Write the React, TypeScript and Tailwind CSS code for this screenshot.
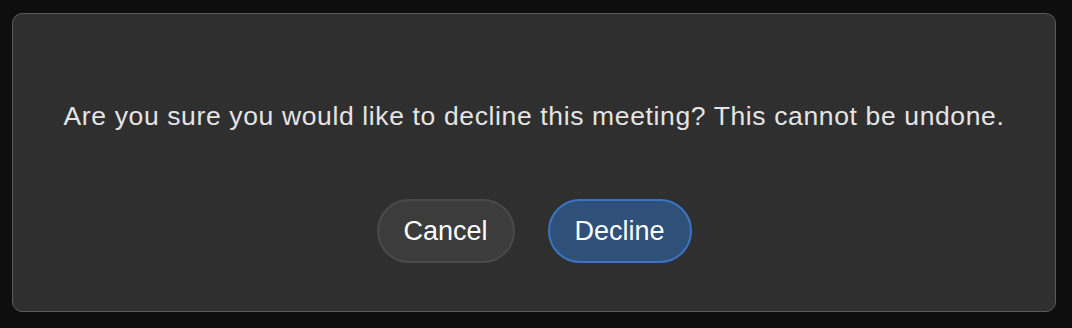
export default function App() {
  return (
    <div className="w-[1072px] h-[328px] bg-[#0e0e0e] pt-[13px] pl-[12px]" style={{ fontFamily: '"Liberation Sans", Arial, sans-serif' }}>
      <div className="w-[1044px] h-[299px] rounded-[10px] border border-[#5a5a5a] bg-[#2f2f2f] flex flex-col items-center pt-[84px]">
        <p className="text-[26.5px] leading-[36px] tracking-[0.63px] text-[#e4e4e4]">
          Are you sure you would like to decline this meeting? This cannot be undone.
        </p>
        <div className="flex gap-[33px] mt-[65px]">
          <button className="w-[138px] h-[64px] rounded-full bg-[#3c3c3c] border-2 border-[#4a4a4a] text-white text-[27px]">
            Cancel
          </button>
          <button className="w-[144px] h-[64px] rounded-full bg-[#2f5078] border-2 border-[#3a75c4] text-white text-[27px]">
            Decline
          </button>
        </div>
      </div>
    </div>
  );
}
